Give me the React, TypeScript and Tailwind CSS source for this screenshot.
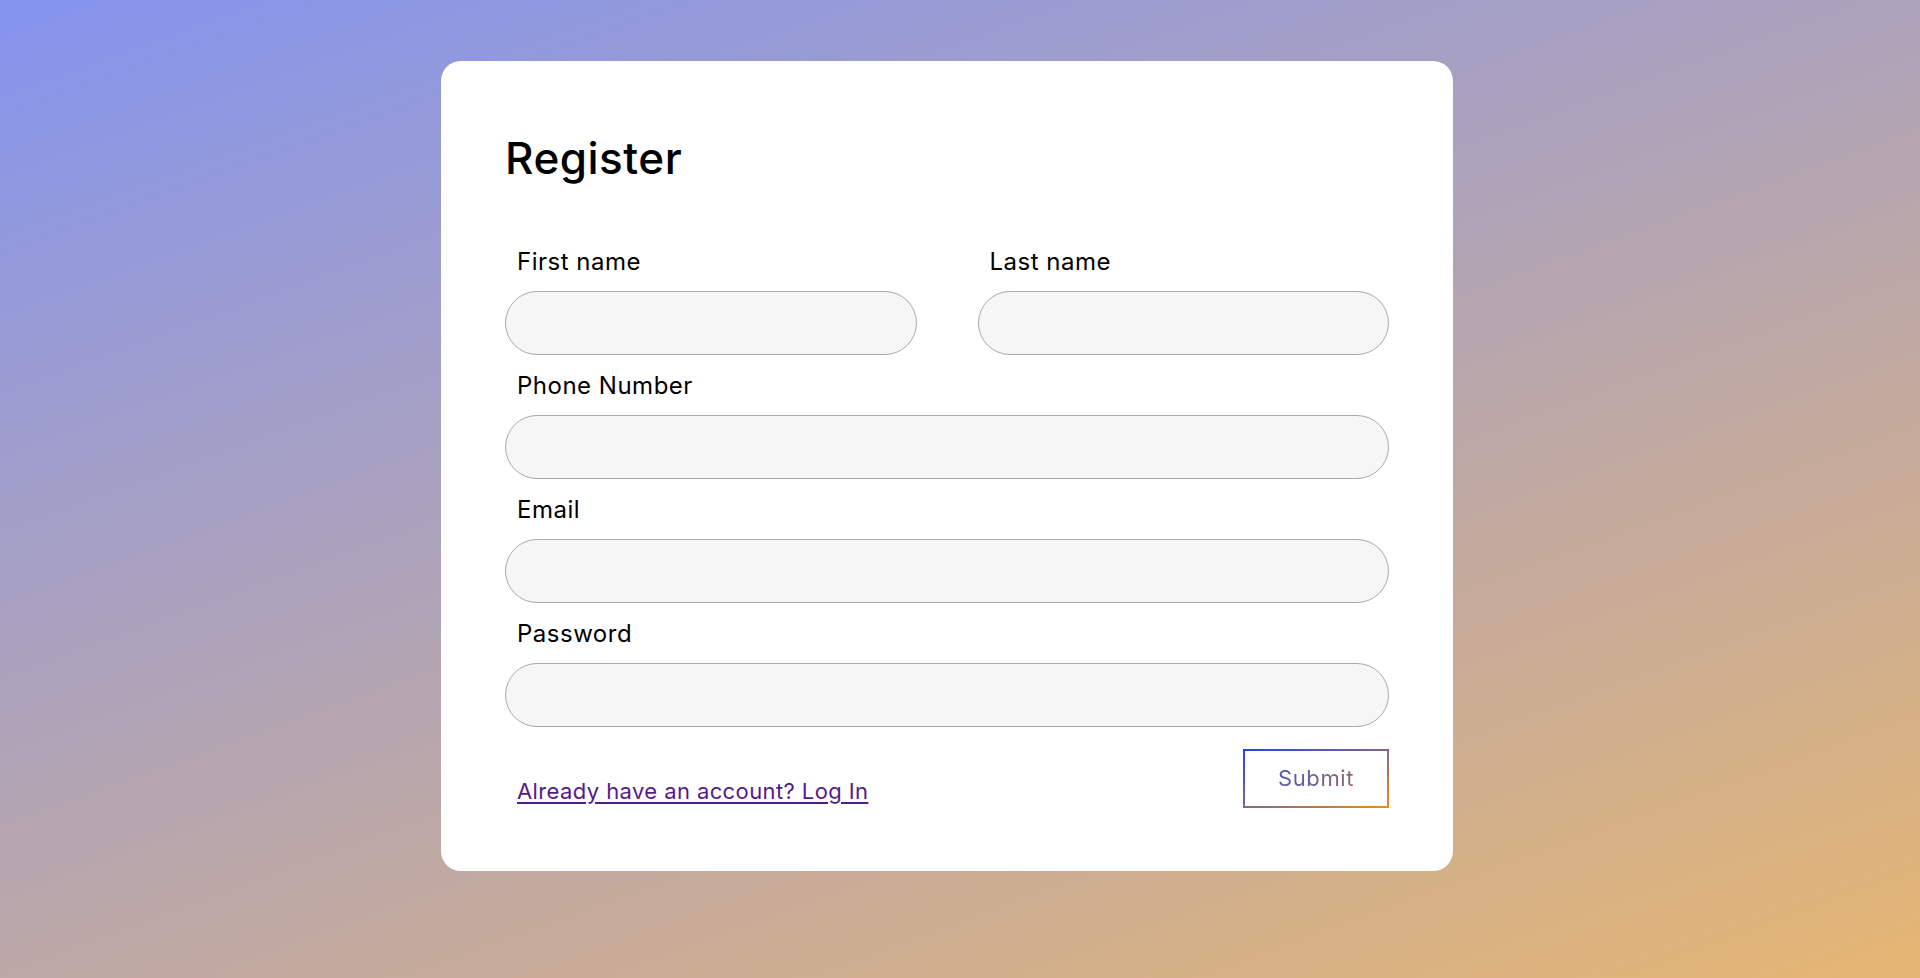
import React, { useState } from 'react';

const labelCls = 'block pl-3 mb-3 text-[24px] leading-[34px] tracking-[0.5px] text-black';
const inputCls =
  'w-full h-16 rounded-full border border-[#aaaaaa] bg-[#f6f6f6] px-6 text-[20px] outline-none';

export default function App() {
  const [firstName, setFirstName] = useState('');
  const [lastName, setLastName] = useState('');
  const [phone, setPhone] = useState('');
  const [email, setEmail] = useState('');
  const [password, setPassword] = useState('');

  return (
    <div
      className="min-h-screen w-full overflow-hidden bg-[linear-gradient(160deg,#8494ee,#e5b673)] pt-[61px]"
      style={{ fontFamily: 'Inter, "Open Sans", sans-serif' }}
    >
      <div className="ml-[441px] w-[1012px] rounded-[20px] bg-white px-[64px] pt-[64px] pb-[63px]">
        <h1 className="text-[44px] leading-[66px] font-medium tracking-[0.5px] text-black">Register</h1>
        <form className="mt-[54px] flex flex-col gap-[14px]" onSubmit={(e) => e.preventDefault()}>
          <div className="grid grid-cols-2 gap-x-[61px]">
            <div>
              <label htmlFor="first" className={labelCls}>First name</label>
              <input id="first" value={firstName} onChange={(e) => setFirstName(e.target.value)} className={inputCls} />
            </div>
            <div>
              <label htmlFor="last" className={labelCls}>Last name</label>
              <input id="last" value={lastName} onChange={(e) => setLastName(e.target.value)} className={inputCls} />
            </div>
          </div>
          <div>
            <label htmlFor="phone" className={labelCls}>Phone Number</label>
            <input id="phone" value={phone} onChange={(e) => setPhone(e.target.value)} className={inputCls} />
          </div>
          <div>
            <label htmlFor="email" className={labelCls}>Email</label>
            <input id="email" type="email" value={email} onChange={(e) => setEmail(e.target.value)} className={inputCls} />
          </div>
          <div>
            <label htmlFor="password" className={labelCls}>Password</label>
            <input id="password" type="password" value={password} onChange={(e) => setPassword(e.target.value)} className={inputCls} />
          </div>
          <div className="mt-[8px] flex items-end justify-between">
            <a href="#" className="pl-3 text-[22px] leading-[34px] tracking-[0.4px] text-[#551a8b] underline underline-offset-[3px]">
              Already have an account? Log In
            </a>
            <div className="bg-[linear-gradient(to_bottom_right,#2040ff,#e8900f)] p-[2px]">
              <button
                type="submit"
                className="flex h-[55px] w-[142px] items-center justify-center bg-white"
              >
                <span className="bg-[linear-gradient(90deg,#5458b0,#8e6470)] bg-clip-text text-[22px] tracking-[0.6px] text-transparent">
                  Submit
                </span>
              </button>
            </div>
          </div>
        </form>
      </div>
    </div>
  );
}
